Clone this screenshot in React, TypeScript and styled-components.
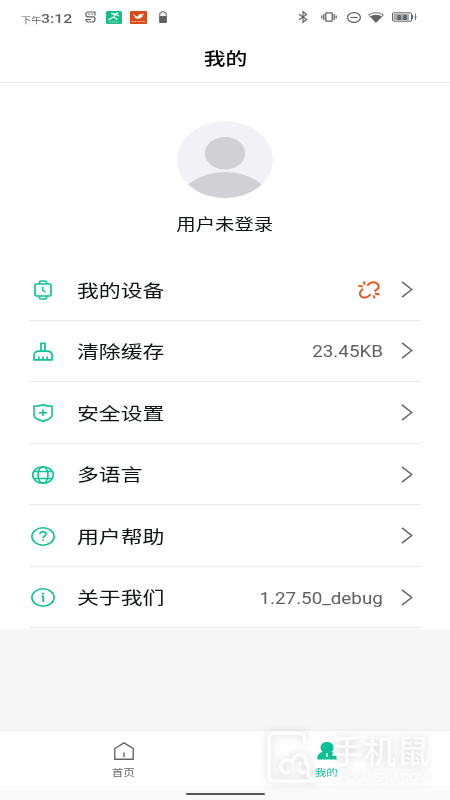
import React from "react";
import styled, { createGlobalStyle } from "styled-components";

const GREEN = "#0cc296";

const GlobalStyle = createGlobalStyle`
  * { box-sizing: border-box; }
  body { margin: 0; background: #fff; }
`;

const Screen = styled.div`
  position: relative;
  display: flex;
  flex-direction: column;
  width: 450px;
  height: 800px;
  overflow: hidden;
  background: #f7f7f7;
  color: #101414;
  font-family: Roboto, "Noto Sans CJK SC", sans-serif;
`;

/* The whole interface uses glyphs wider than their height. */
const Wide = styled.span<{
  $size: number;
  $origin?: string;
  $weight?: number;
  $color?: string;
  $stretch?: number;
  $drop?: number;
}>`
  display: inline-block;
  white-space: nowrap;
  line-height: 1.4;
  padding-top: ${(p) => p.$drop ?? 0}px;
  font-size: ${(p) => p.$size}px;
  font-weight: ${(p) => p.$weight ?? 400};
  color: ${(p) => p.$color ?? "inherit"};
  transform: scaleX(${(p) => p.$stretch ?? 1.25});
  transform-origin: ${(p) => p.$origin ?? "center"} center;
`;

const Icon = styled.svg`
  display: block;
  flex: none;
  overflow: visible;
  fill: none;
  stroke: currentColor;
`;

const StatusBar = styled.div`
  display: flex;
  align-items: center;
  justify-content: space-between;
  height: 35px;
  padding: 0 32px 0 21px;
  background: #fff;
  color: #626262;
`;

const StatusLeft = styled.div`
  display: flex;
  align-items: center;
`;

const Clock = styled.div`
  display: flex;
  align-items: baseline;
  width: 64px;
  padding-top: 1px;
`;

const Meridiem = styled.div`
  width: 20px;
`;

const Notices = styled.div`
  display: grid;
  grid-template-columns: 21px 24px 29px 8px;
  align-items: center;
`;

const StatusRight = styled.div`
  display: grid;
  grid-template-columns: 23px 26px 21px 24px 25px;
  align-items: center;
  margin-top: -1px;
  margin-right: 1px;
`;

const Header = styled.header`
  display: flex;
  align-items: center;
  justify-content: center;
  height: 48px;
  background: #fff;
  border-bottom: 1px solid #e8e8e8;
`;

const Profile = styled.section`
  display: flex;
  flex-direction: column;
  align-items: center;
  gap: 16px;
  height: 176px;
  padding-top: 38px;
  background: #fff;
`;

const Menu = styled.main`
  display: flex;
  flex-direction: column;
  height: 369.5px;
  padding: 0 29px;
  background: #fff;
`;

const MenuRow = styled.div`
  display: flex;
  flex: 1;
  align-items: center;
  border-bottom: 1px solid #eaeaea;
`;

const IconSlot = styled.div`
  display: flex;
  justify-content: center;
  width: 28px;
  margin-right: 20px;
  padding-top: 1px;
  color: ${GREEN};
`;

const Value = styled.div`
  display: flex;
  flex: 1;
  justify-content: flex-end;
  margin-right: 18px;
`;

const StatusMark = styled.div`
  margin-right: 3px;
  padding-top: 1px;
`;

const ChevronSlot = styled.div`
  width: 20px;
  color: #666;
`;

const Gap = styled.div`
  flex: 1;
`;

const TabBar = styled.nav`
  display: flex;
  height: 55px;
  padding: 0 22px;
  background: #fff;
  box-shadow: 0 -1px 2px #ececec;
`;

const Tab = styled.div<{ $active?: boolean }>`
  display: flex;
  flex: 1;
  flex-direction: column;
  align-items: center;
  gap: 7px;
  padding-top: 11px;
  color: ${(p) => (p.$active ? GREEN : "#666")};
`;

const GestureArea = styled.div`
  display: flex;
  align-items: center;
  justify-content: center;
  height: 14px;
  padding-top: 1px;
  background: #fafafa;
`;

const GestureBar = styled.div`
  width: 79px;
  height: 2px;
  border-radius: 1px;
  background: #555;
`;

/* Site mark laid over the tab bar. */
const Watermark = styled.div`
  position: absolute;
  left: 266px;
  top: 730px;
  display: flex;
  color: rgba(255, 255, 255, 0.85);
  filter: drop-shadow(0 0 4px rgba(0, 0, 0, 0.2));
`;

const MarkText = styled.div`
  display: flex;
  flex-direction: column;
  align-items: flex-start;
  margin-left: 9px;
`;

const MarkName = styled.span`
  font: 500 32px/38px "Noto Sans CJK SC", sans-serif;
  letter-spacing: 1px;
  white-space: nowrap;
`;

const MarkSite = styled.span`
  margin-top: 3px;
  font: 400 11.5px/12px "Liberation Sans", sans-serif;
  white-space: nowrap;
`;

const WatchIcon = () => (
  <Icon width="18" height="20" viewBox="0 0 18 20" strokeWidth="1.7">
    <rect x="1" y="4" width="16" height="12" rx="1.5" />
    <path d="M5.500 4V2.200Q5.500 1 7 1h4q1.500 0 1.500 1.200V4M5.500 16v1.800Q5.500 19 7 19h4q1.500 0 1.500-1.200V16" />
    <path d="M8.700 6.800v3.300l2.700 2.200" strokeWidth="1.400" />
  </Icon>
);

const BroomIcon = () => (
  <Icon width="20" height="19" viewBox="0 0 20 19" strokeWidth="1.7">
    <path d="M8 9V1.300h4V9M1 17.800v-4Q1 9.200 6 9.200h8q5 0 5 4.600v4ZM5.800 18v-3.500M10 18v-3.500M14.200 18v-3.500" />
  </Icon>
);

const ShieldIcon = () => (
  <Icon width="20" height="18" viewBox="0 0 20 18" strokeWidth="1.6">
    <path d="M10 .8Q14 2.300 19 2.300v8.200q0 3-3 4.400L10 17.300 4 14.900Q1 13.500 1 10.500V2.300Q6 2.300 10 .8ZM6 8.800h8M10 5.600V12" />
  </Icon>
);

const GlobeIcon = () => (
  <Icon width="22" height="18" viewBox="0 0 22 18" strokeWidth="1.600">
    <ellipse cx="11" cy="9" rx="10.300" ry="8.300" />
    <ellipse cx="11" cy="9" rx="5" ry="8.300" />
    <path d="M2.200 5.500h17.600M2.200 12.500h17.600" />
  </Icon>
);

const HelpIcon = () => (
  <Icon width="24" height="19" viewBox="0 0 24 19" strokeWidth="1.600">
    <ellipse cx="12" cy="9.500" rx="11.100" ry="8.700" />
    <path d="M8.900 7.300c0-1.600 1.200-2.500 3-2.500s3.200.9 3.200 2.300c0 2-3 1.900-3 4" />
    <path d="M11.200 13.200h1.800" />
  </Icon>
);

const InfoIcon = () => (
  <Icon width="24" height="19" viewBox="0 0 24 19" strokeWidth="1.600">
    <ellipse cx="12" cy="9.500" rx="11.100" ry="8.700" />
    <path d="M10.500 8.500h1.700V14M11 5.700h2.200" strokeWidth="1.800" />
  </Icon>
);

const UnlinkIcon = () => (
  <Icon width="22" height="18" viewBox="0 0 22 18" stroke="#ed4c16" strokeWidth="1.8" color="#ed4c16">
    <path d="M9.300 4.700l2-2Q14 .5 17.500 1.600c3.300 1.200 4 4.300 2 6.500l-3 2.200M5.200 7.800 2.900 9.900c-2.100 2.200-1.300 5.300 2 6.400q3.600 1 6.300-1.600l1.500-1.400" />
    <path d="M.3 4.700l4.500 1M5.600.6l1.200 3M15.300 14.400l1.200 3M17 12.500l4.500 1" />
  </Icon>
);

const Chevron = () => (
  <Icon width="12" height="17" viewBox="0 0 12 17" strokeWidth="1.500">
    <path d="M1 .8 10.700 8.500 1 16.200" />
  </Icon>
);

const rows = [
  { label: "我的设备", icon: <WatchIcon />, value: <StatusMark><UnlinkIcon /></StatusMark> },
  { label: "清除缓存", icon: <BroomIcon />, text: "23.45KB" },
  { label: "安全设置", icon: <ShieldIcon /> },
  { label: "多语言", icon: <GlobeIcon /> },
  { label: "用户帮助", icon: <HelpIcon /> },
  { label: "关于我们", icon: <InfoIcon />, text: "1.27.50_debug" },
];

const NoticeIcons = () => (
  <Notices>
    <Icon width="11" height="12" viewBox="0 0 11 12" strokeWidth="1.200">
      <path d="M10.500 1H3Q.8 1 .8 3.200v.600Q.8 5.800 3 5.800h5.500q1.500 0 1.500 1.400v1Q10 11 7.500 11h-4Q1.200 11 1 8.500h5M3.300 3.200h1.500M6.700 3.200h1.500M10 1.500v3" />
    </Icon>
    <Icon width="16" height="13" viewBox="0 0 16 13">
      <rect width="16" height="13" rx="1.500" fill="#16bf85" stroke="none" />
      <path d="M5 2.500 9.500 3 7.500 6l4 2.500M7.500 6 2.500 9M9.500 3.300 13 5" stroke="#fff" strokeWidth="1.300" />
      <circle cx="11.300" cy="2.200" r="1" fill="#fff" stroke="none" />
      <path d="M3.500 11h9" stroke="#d6f5e8" strokeWidth=".8" strokeDasharray="1.500 .7" />
    </Icon>
    <Icon width="17" height="13" viewBox="0 0 17 13">
      <rect width="17" height="13" rx="1" fill="#d94b1a" stroke="none" />
      <path d="M3 3.500 7.500 6l1.800-2.500L14 3l-3 1.800 2-.1Q10.500 8 7 7.600L4.500 6.200H6Z" fill="#fff" stroke="#fff" strokeWidth=".4" />
      <path d="M2 10.500h13" stroke="#ffe1d4" strokeWidth=".9" strokeDasharray="1.500 1" />
    </Icon>
    <Icon width="8" height="12" viewBox="0 0 8 12">
      <path d="M2.300 2V.8h3.400V2H7.200v9.400H.8V2Z" />
      <path d="M.8 5.500h6.400v6H.8Z" fill="#626262" />
    </Icon>
  </Notices>
);

const SystemIcons = () => (
  <StatusRight>
    <Icon width="10" height="12" viewBox="0 0 10 12" strokeWidth="1.200">
      <path d="M1 3.200l7.500 5.300L5 11.200V.800L8.500 3.500 1 8.800" />
    </Icon>
    <Icon width="16" height="10" viewBox="0 0 16 10" strokeWidth="1.300">
      <rect x="4.800" y=".8" width="6.400" height="8.400" rx=".5" />
      <path d="M2.800 2v6M.8 3.500v3M13.200 2v6M15.200 3.500v3" />
    </Icon>
    <Icon width="14" height="11" viewBox="0 0 14 11" strokeWidth="1.200">
      <ellipse cx="7" cy="5.500" rx="6.400" ry="4.900" />
      <path d="M3.500 5.500h7" />
    </Icon>
    <Icon width="16" height="11" viewBox="0 0 16 11">
      <path d="M.7 3Q8-1.700 15.300 3L8 10.300Z" strokeWidth=".9" />
      <path d="M2.700 4.500Q8 1.700 13.300 4.500L8 10.300Z" fill="#626262" />
    </Icon>
    <Icon width="25" height="10" viewBox="0 0 25 10">
      <rect x=".5" y=".800" width="19" height="8.400" rx="1.200" strokeWidth="1" />
      <rect x="1.500" y="1.800" width="15.500" height="6.400" fill="#aaa" stroke="none" />
      <text x="5" y="7.900" fill="#444" stroke="none" fontSize="7.500" fontWeight="700" textLength="10" fontFamily="Roboto, sans-serif">88</text>
      <path d="M20.500 3v4" />
      <path d="M23.500 1.500v7M22.200 5h2.600" strokeWidth=".8" />
    </Icon>
  </StatusRight>
);

export default function App() {
  return (
    <Screen>
      <GlobalStyle />
      <StatusBar>
        <StatusLeft>
          <Clock>
            <Meridiem><Wide $size={8.2} $origin="left">下午</Wide></Meridiem>
            <Wide $size={13.4} $origin="left" $weight={500} $stretch={1.18}>3:12</Wide>
          </Clock>
          <NoticeIcons />
        </StatusLeft>
        <SystemIcons />
      </StatusBar>
      <Header>
        <Wide $size={17.4} $weight={500} $color="#000" $drop={1}>我的</Wide>
      </Header>
      <Profile>
        <Icon width="96" height="78" viewBox="0 0 96 78">
          <defs>
            <clipPath id="avatar"><ellipse cx="48" cy="38.700" rx="48" ry="38.500" /></clipPath>
          </defs>
          <g clipPath="url(#avatar)" stroke="none">
            <rect width="96" height="78" fill="#f2f1f6" />
            <ellipse cx="48" cy="32.200" rx="20.200" ry="16.200" fill="#d1d0d5" />
            <ellipse cx="48" cy="86" rx="48" ry="35" fill="#d1d0d5" />
          </g>
        </Icon>
        <Wide $size={15.5}>用户未登录</Wide>
      </Profile>
      <Menu>
        {rows.map((row) => (
          <MenuRow key={row.label}>
            <IconSlot>{row.icon}</IconSlot>
            <Wide $size={17.5} $origin="left" $drop={3}>{row.label}</Wide>
            <Value>
              {row.value}
              {row.text && (
                <Wide $size={15.7} $origin="right" $color="#606060" $stretch={1.2} $drop={3}>{row.text}</Wide>
              )}
            </Value>
            <ChevronSlot><Chevron /></ChevronSlot>
          </MenuRow>
        ))}
      </Menu>
      <Gap />
      <TabBar>
        <Tab>
          <Icon width="20" height="18" viewBox="0 0 20 18" strokeWidth="1.400">
            <path d="M.8 6.500 10 .9l9.200 5.600v10.700H.8ZM10 10.500V15" />
          </Icon>
          <Wide $size={9.2}>首页</Wide>
        </Tab>
        <Tab $active>
          <Icon width="20" height="18" viewBox="0 0 20 18">
            <path d="M10 0C5.500 0 3.500 2.500 3.500 5.500c0 2 1 3.500 2.200 4.500C2 10.800.3 12.500.3 17.500h19.400c0-5-1.700-6.700-5.400-7.500 1.200-1 2.200-2.500 2.200-4.500C16.500 2.500 14.500 0 10 0Z" fill={GREEN} stroke="none" />
            <path d="M10 11v4" stroke="#fff" strokeWidth="1.500" />
          </Icon>
          <Wide $size={9.2}>我的</Wide>
        </Tab>
      </TabBar>
      <GestureArea><GestureBar /></GestureArea>
      <Watermark>
        <Icon width="56" height="54" viewBox="0 0 56 54" strokeWidth="3.600" strokeLinecap="round">
          <path d="M38.500 12V8.500Q38.500 3 33 3H9Q3 3 3 9v36q0 6 6 6h42q-9-2-9.500-8 3-7-2-10.500c2-9-11-11-13-1-8-4-13 2-11.500 7 1 4 5 4.500 7 3.500" />
          <path d="M33.500 40.500q2 3 4.500 1.500M34 33.500v.2" />
        </Icon>
        <MarkText>
          <MarkName>手机鼠</MarkName>
          <MarkSite>SHOUJISHU.COM</MarkSite>
        </MarkText>
      </Watermark>
    </Screen>
  );
}
